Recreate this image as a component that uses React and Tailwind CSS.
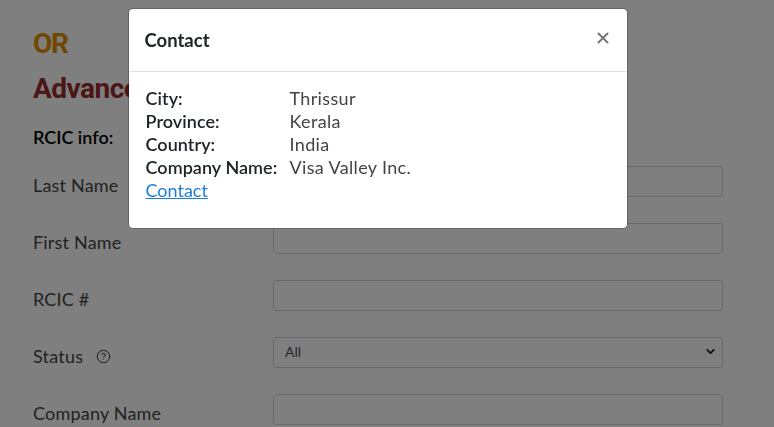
import { X, CircleHelp, ChevronDown } from "lucide-react";

const fields = [
  { label: "Last Name" },
  { label: "First Name" },
  { label: "RCIC #" },
  { label: "Status", help: true, select: true },
  { label: "Company Name" },
];

const details = [
  ["City:", "Thrissur"],
  ["Province:", "Kerala"],
  ["Country:", "India"],
  ["Company Name:", "Visa Valley Inc."],
];

function FormRow({ label, help, select }) {
  return (
    <div className="flex h-[31px] items-center mb-[26px]">
      <div className="flex w-[240px] items-center gap-[13px] pt-[8px] text-[18px] tracking-[0.2px] text-[#444]">
        <span>{label}</span>
        {help && <CircleHelp size={15} strokeWidth={1.6} className="text-[#333]" />}
      </div>
      {select ? (
        <div className="flex h-[31px] w-[450px] items-center justify-between rounded-[3px] border border-[#ced4da] pb-[2px] pl-[11px] pr-[5px] text-[14px] text-[#495057]">
          <span>All</span>
          <ChevronDown size={13} strokeWidth={3.5} className="text-[#222]" />
        </div>
      ) : (
        <div className="h-[31px] w-[450px] rounded-[3px] border border-[#ced4da]" />
      )}
    </div>
  );
}

export default function App() {
  return (
    <div className="relative h-[427px] w-[774px] overflow-hidden bg-white font-['Lato','Noto_Sans',sans-serif]">
      <div className="pl-[33px] pt-[27px]">
        <h2 className="font-['Roboto',sans-serif] text-[28px] font-bold leading-[34px] tracking-[-1.4px] text-[#e28f00]">OR</h2>
        <h3 className="mt-[11px] font-['Roboto',sans-serif] text-[28px] font-bold leading-[34px] tracking-[-0.5px] text-[#9a2c2c]">Advanced Search</h3>
        <p className="mt-[19px] mb-[17px] text-[18px] font-semibold leading-[24px] text-black">RCIC info:</p>
        {fields.map((f) => (
          <FormRow key={f.label} {...f} />
        ))}
      </div>

      <div className="fixed inset-0 flex justify-center bg-black/50 pr-[18px]">
        <div className="mt-[8px] h-[221px] w-[500px] self-start rounded-[5px] border border-black/20 bg-white bg-clip-padding">
          <div className="flex h-[63px] items-center justify-between border-b border-[#dee2e6] pl-[15.5px] pr-[15px]">
            <h5 className="pt-[1px] text-[18.5px] font-bold text-[#212529]">Contact</h5>
            <X size={18} strokeWidth={2.6} className="mb-[4px] text-[#777]" />
          </div>
          <div className="pl-[16.5px] pt-[15px] text-[18px] leading-[23px]">
            {details.map(([k, v]) => (
              <div key={k} className="flex">
                <span className="w-[144px] font-semibold tracking-[0.05px] text-[#212529]">{k}</span>
                <span className="tracking-[0.35px] text-[#444]">{v}</span>
              </div>
            ))}
            <a href="#" className="text-[#1a7fe0] underline">Contact</a>
          </div>
        </div>
      </div>
    </div>
  );
}
